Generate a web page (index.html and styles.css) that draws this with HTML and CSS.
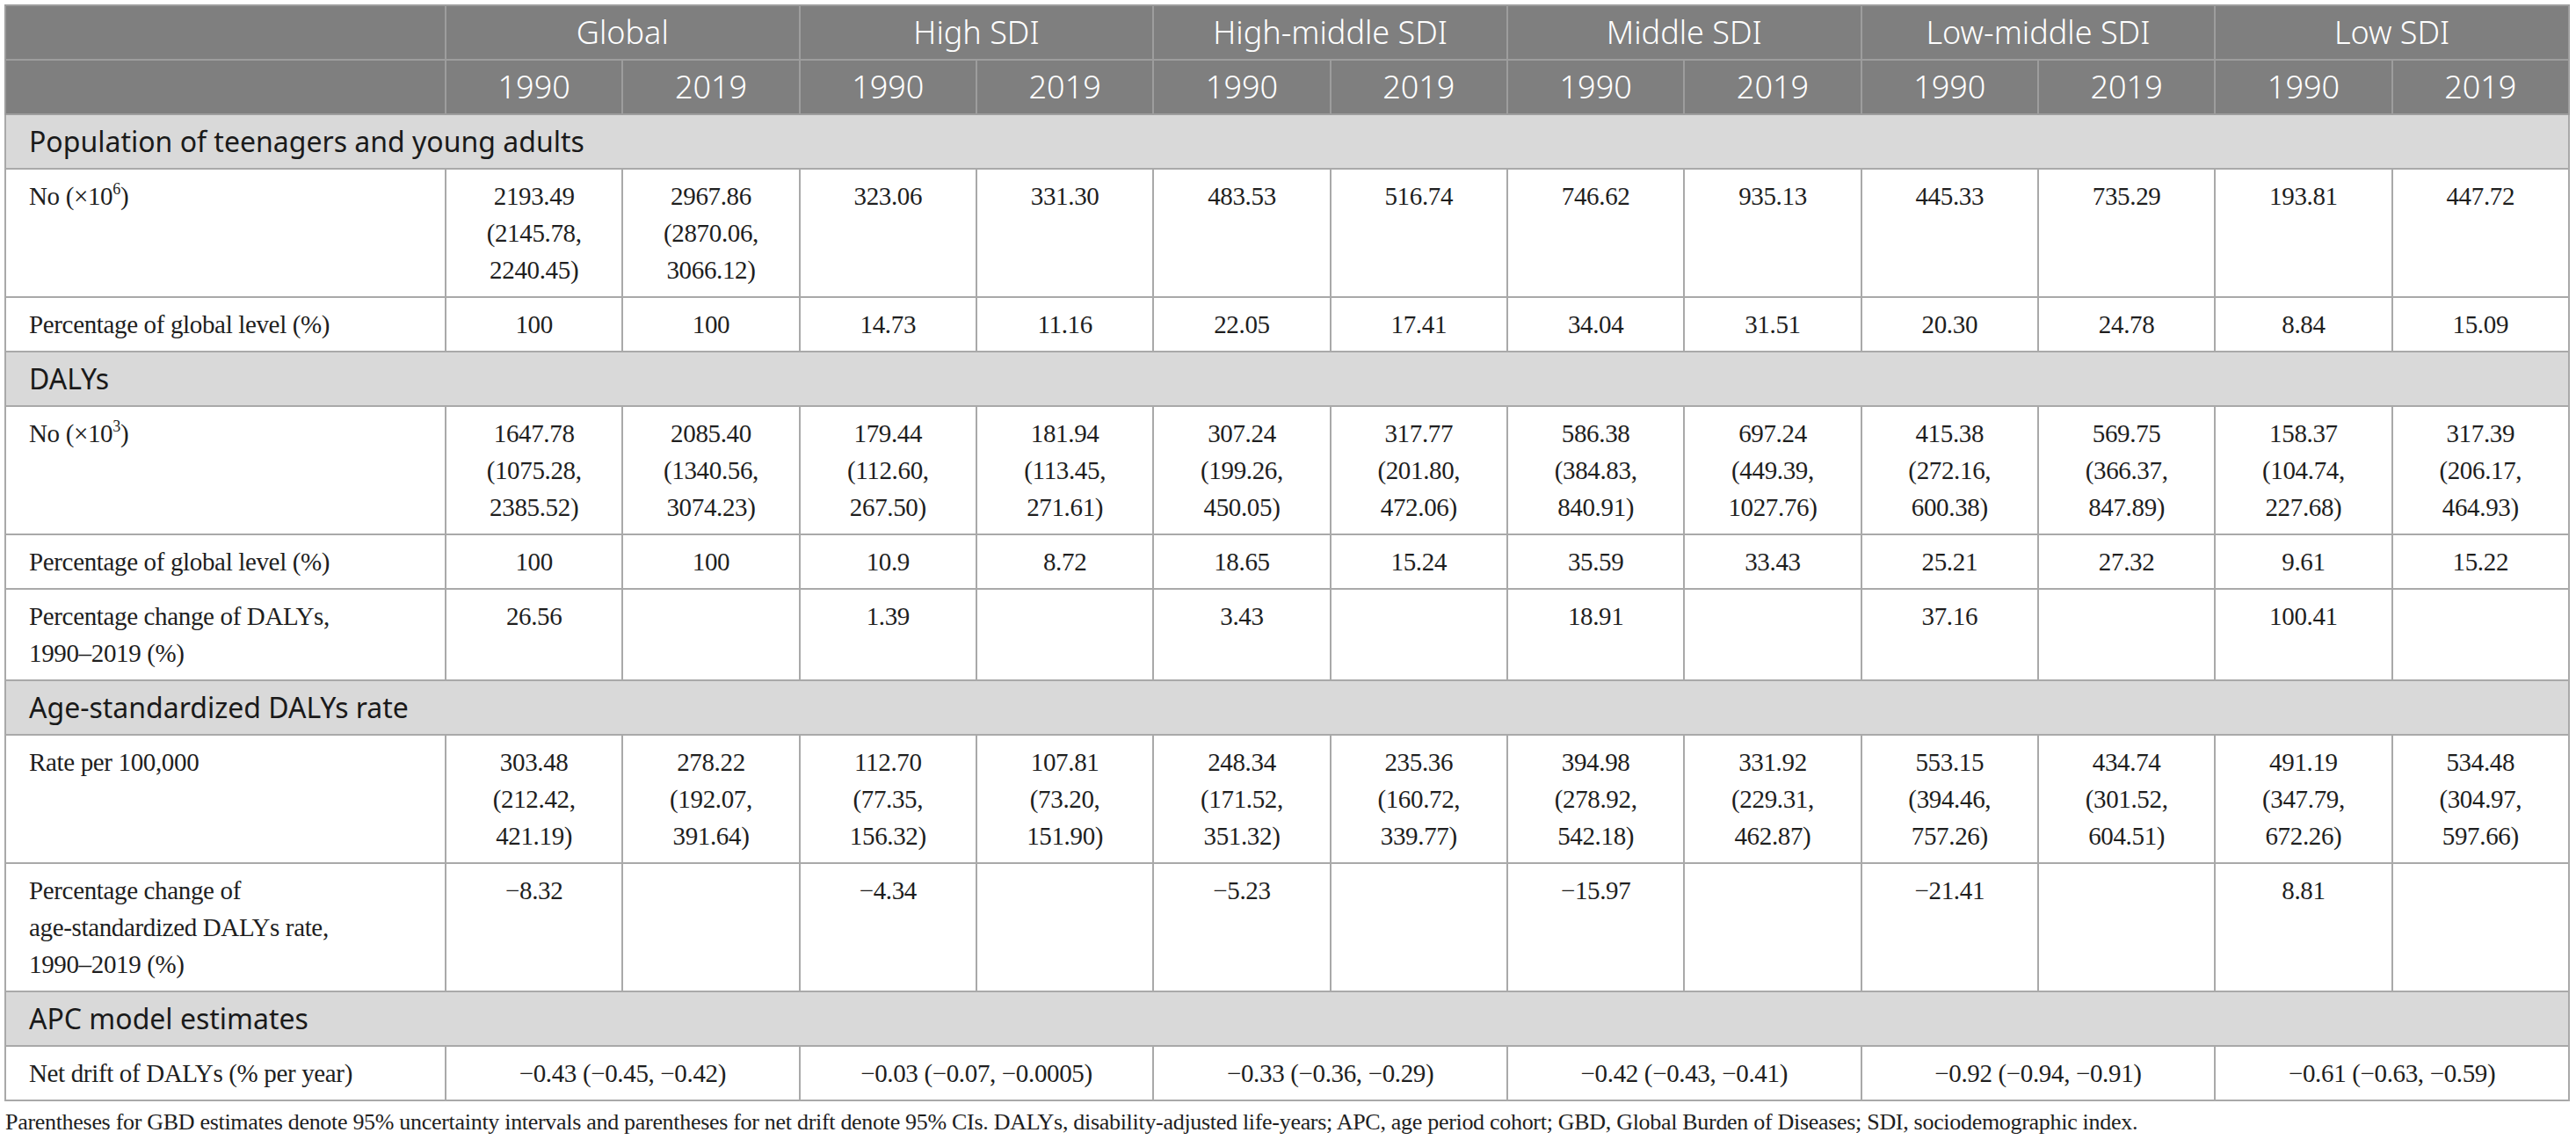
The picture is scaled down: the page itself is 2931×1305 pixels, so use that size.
FILE: index.html
```html
<!DOCTYPE html>
<html lang="en">
<head>
<meta charset="utf-8">
<title>Table</title>
<link rel="stylesheet" href="styles.css">
</head>
<body>
<table class="data">
  <colgroup>
    <col class="c-label">
    <col><col><col><col><col><col><col><col><col><col><col><col>
  </colgroup>
  <thead>
    <tr class="h1">
      <th></th>
      <th colspan="2">Global</th>
      <th colspan="2">High SDI</th>
      <th colspan="2">High-middle SDI</th>
      <th colspan="2">Middle SDI</th>
      <th colspan="2">Low-middle SDI</th>
      <th colspan="2">Low SDI</th>
    </tr>
    <tr class="h2">
      <th></th>
      <th>1990</th><th>2019</th>
      <th>1990</th><th>2019</th>
      <th>1990</th><th>2019</th>
      <th>1990</th><th>2019</th>
      <th>1990</th><th>2019</th>
      <th>1990</th><th>2019</th>
    </tr>
  </thead>
  <tbody>
    <tr class="sec"><td colspan="13">Population of teenagers and young adults</td></tr>
    <tr>
      <td class="lbl">No (×10<sup>6</sup>)</td>
      <td>2193.49<br>(2145.78,<br>2240.45)</td>
      <td>2967.86<br>(2870.06,<br>3066.12)</td>
      <td>323.06</td><td>331.30</td>
      <td>483.53</td><td>516.74</td>
      <td>746.62</td><td>935.13</td>
      <td>445.33</td><td>735.29</td>
      <td>193.81</td><td>447.72</td>
    </tr>
    <tr>
      <td class="lbl">Percentage of global level (%)</td>
      <td>100</td><td>100</td>
      <td>14.73</td><td>11.16</td>
      <td>22.05</td><td>17.41</td>
      <td>34.04</td><td>31.51</td>
      <td>20.30</td><td>24.78</td>
      <td>8.84</td><td>15.09</td>
    </tr>
    <tr class="sec"><td colspan="13">DALYs</td></tr>
    <tr>
      <td class="lbl">No (×10<sup>3</sup>)</td>
      <td>1647.78<br>(1075.28,<br>2385.52)</td>
      <td>2085.40<br>(1340.56,<br>3074.23)</td>
      <td>179.44<br>(112.60,<br>267.50)</td>
      <td>181.94<br>(113.45,<br>271.61)</td>
      <td>307.24<br>(199.26,<br>450.05)</td>
      <td>317.77<br>(201.80,<br>472.06)</td>
      <td>586.38<br>(384.83,<br>840.91)</td>
      <td>697.24<br>(449.39,<br>1027.76)</td>
      <td>415.38<br>(272.16,<br>600.38)</td>
      <td>569.75<br>(366.37,<br>847.89)</td>
      <td>158.37<br>(104.74,<br>227.68)</td>
      <td>317.39<br>(206.17,<br>464.93)</td>
    </tr>
    <tr>
      <td class="lbl">Percentage of global level (%)</td>
      <td>100</td><td>100</td>
      <td>10.9</td><td>8.72</td>
      <td>18.65</td><td>15.24</td>
      <td>35.59</td><td>33.43</td>
      <td>25.21</td><td>27.32</td>
      <td>9.61</td><td>15.22</td>
    </tr>
    <tr>
      <td class="lbl">Percentage change of DALYs,<br>1990–2019 (%)</td>
      <td>26.56</td><td></td>
      <td>1.39</td><td></td>
      <td>3.43</td><td></td>
      <td>18.91</td><td></td>
      <td>37.16</td><td></td>
      <td>100.41</td><td></td>
    </tr>
    <tr class="sec"><td colspan="13">Age-standardized DALYs rate</td></tr>
    <tr>
      <td class="lbl">Rate per 100,000</td>
      <td>303.48<br>(212.42,<br>421.19)</td>
      <td>278.22<br>(192.07,<br>391.64)</td>
      <td>112.70<br>(77.35,<br>156.32)</td>
      <td>107.81<br>(73.20,<br>151.90)</td>
      <td>248.34<br>(171.52,<br>351.32)</td>
      <td>235.36<br>(160.72,<br>339.77)</td>
      <td>394.98<br>(278.92,<br>542.18)</td>
      <td>331.92<br>(229.31,<br>462.87)</td>
      <td>553.15<br>(394.46,<br>757.26)</td>
      <td>434.74<br>(301.52,<br>604.51)</td>
      <td>491.19<br>(347.79,<br>672.26)</td>
      <td>534.48<br>(304.97,<br>597.66)</td>
    </tr>
    <tr>
      <td class="lbl">Percentage change of<br>age-standardized DALYs rate,<br>1990–2019 (%)</td>
      <td>−8.32</td><td></td>
      <td>−4.34</td><td></td>
      <td>−5.23</td><td></td>
      <td>−15.97</td><td></td>
      <td>−21.41</td><td></td>
      <td>8.81</td><td></td>
    </tr>
    <tr class="sec"><td colspan="13">APC model estimates</td></tr>
    <tr>
      <td class="lbl">Net drift of DALYs (% per year)</td>
      <td colspan="2">−0.43 (−0.45, −0.42)</td>
      <td colspan="2">−0.03 (−0.07, −0.0005)</td>
      <td colspan="2">−0.33 (−0.36, −0.29)</td>
      <td colspan="2">−0.42 (−0.43, −0.41)</td>
      <td colspan="2">−0.92 (−0.94, −0.91)</td>
      <td colspan="2">−0.61 (−0.63, −0.59)</td>
    </tr>
  </tbody>
</table>
<p class="note">Parentheses for GBD estimates denote 95% uncertainty intervals and parentheses for net drift denote 95% CIs. DALYs, disability-adjusted life-years; APC, age period cohort; GBD, Global Burden of Diseases; SDI, sociodemographic index.</p>
</body>
</html>
```
FILE: styles.css
```css
html, body {
  margin: 0;
  padding: 0;
  background: #ffffff;
}

body {
  padding: 5px 0 0 5px;
  font-family: "Liberation Serif", "Times New Roman", serif;
  color: #1e1e1e;
}

.data {
  border-collapse: collapse;
  table-layout: fixed;
  width: 2919px;
  border: 2px solid #a9a9a9;
}

.c-label {
  width: 501px;
}

.data th,
.data td {
  border: 2px solid #a9a9a9;
  padding: 9px 6px;
  line-height: 42px;
  vertical-align: top;
  text-align: center;
}

.data thead th {
  background: #7f7f7f;
  color: #ffffff;
  font-family: "Noto Sans", "Open Sans", sans-serif;
  font-weight: 300;
  font-size: 36px;
  border-color: #9d9d9d;
}

.data td {
  font-size: 29px;
  letter-spacing: -0.35px;
}

.data td.lbl {
  text-align: left;
  padding-left: 26px;
}

.data tr.sec td {
  background: #d9d9d9;
  text-align: left;
  padding-left: 26px;
  font-family: "Noto Sans", "Open Sans", sans-serif;
  font-size: 32px;
  letter-spacing: 0;
  color: #1a1a1a;
}

.data sup {
  font-size: 18px;
  line-height: 0;
  vertical-align: 12px;
}

.note {
  margin: 3px 0 0 1px;
  font-size: 26px;
  letter-spacing: -0.3px;
  line-height: 42px;
  color: #1e1e1e;
}
```
